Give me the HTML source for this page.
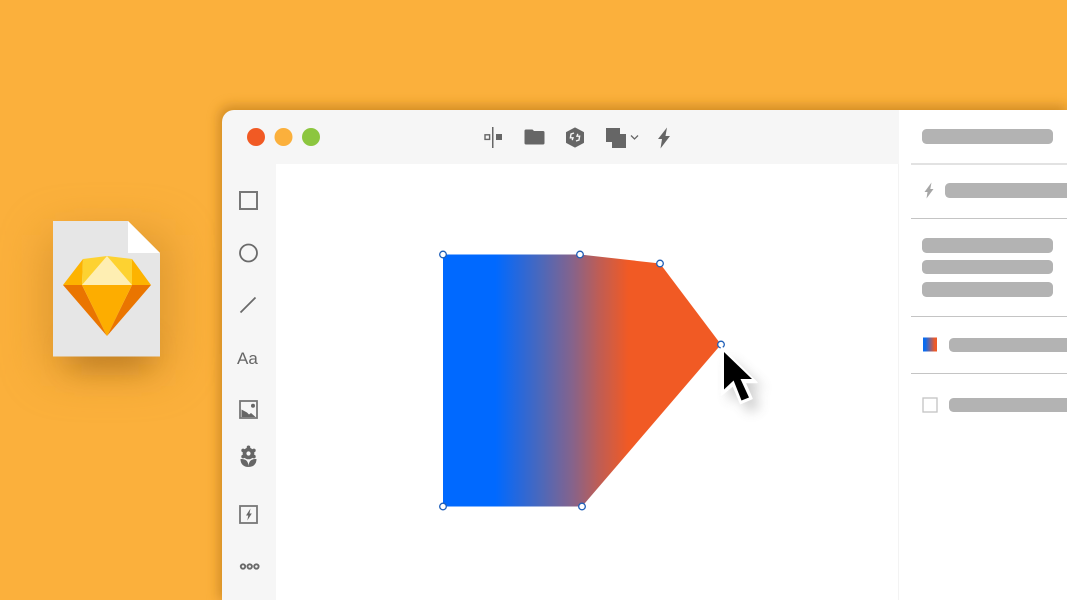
<!DOCTYPE html>
<html>
<head>
<meta charset="utf-8">
<style>
html,body{margin:0;padding:0;width:1067px;height:600px;overflow:hidden;background:#fbb03c}
svg{position:absolute;left:0;top:0;display:block}
</style>
</head>
<body>
<svg width="1067" height="600" viewBox="0 0 1067 600" xmlns="http://www.w3.org/2000/svg">
<defs>
<linearGradient id="g" gradientUnits="userSpaceOnUse" x1="443" y1="0" x2="720" y2="0">
<stop offset="0.19" stop-color="#0069ff"/>
<stop offset="0.35" stop-color="#4a68bc"/>
<stop offset="0.47" stop-color="#87638a"/>
<stop offset="0.56" stop-color="#bd5d56"/>
<stop offset="0.67" stop-color="#f15a24"/>
</linearGradient>
<linearGradient id="sw" x1="0" x2="1" y1="0" y2="0">
<stop offset="0.15" stop-color="#0a6cf0"/>
<stop offset="0.85" stop-color="#ee5a28"/>
</linearGradient>
<filter id="s1" filterUnits="userSpaceOnUse" x="150" y="50" width="950" height="600"><feGaussianBlur stdDeviation="6"/></filter>
<filter id="s2" filterUnits="userSpaceOnUse" x="-60" y="150" width="340" height="340"><feGaussianBlur stdDeviation="14"/></filter>
<filter id="s2b" filterUnits="userSpaceOnUse" x="-60" y="150" width="340" height="340"><feGaussianBlur stdDeviation="24"/></filter>
<filter id="s3" filterUnits="userSpaceOnUse" x="690" y="330" width="110" height="110"><feGaussianBlur stdDeviation="6"/></filter>
<clipPath id="win"><path d="M222 600V122a12 12 0 0 1 12-12H1067V600Z"/></clipPath>
</defs>

<rect width="1067" height="600" fill="#fbb03c"/>

<!-- window shadow -->
<path d="M219 600V118a12 12 0 0 1 12-12H1067V600Z" fill="#b87618" opacity=".65" filter="url(#s1)"/>

<!-- window -->
<g clip-path="url(#win)">
<rect x="222" y="110" width="845" height="490" fill="#f6f6f6"/>
<rect x="276" y="164" width="623" height="436" fill="#fff"/>
<rect x="899" y="110" width="168" height="490" fill="#fff"/>
<rect x="898" y="164" width="1" height="436" fill="#f3f3f3"/>
</g>

<!-- traffic lights -->
<circle cx="256" cy="137" r="9" fill="#f15a24"/>
<circle cx="283.500" cy="137" r="9" fill="#fbb03c"/>
<circle cx="311" cy="137" r="9" fill="#8cc63f"/>

<!-- toolbar icons -->
<g fill="#666">
<rect x="492" y="127" width="1.500" height="21"/>
<rect x="485" y="134.800" width="4.600" height="4.600" fill="none" stroke="#666" stroke-width="1.400"/>
<rect x="496" y="134" width="6" height="6"/>
<path d="M524.500 131a1.500 1.500 0 0 1 1.500-1.500h6.500l1.500 1.500h9a1.500 1.500 0 0 1 1.500 1.500V143a1.500 1.500 0 0 1-1.500 1.500H526a1.500 1.500 0 0 1-1.500-1.500Z"/>
<path d="M575 128l8.500 4.500v10L575 147l-8.500-4.500v-10Z" stroke="#666" stroke-width="1" stroke-linejoin="round"/>
<path d="M606 128h14v6h6v14h-14v-6h-6Z"/>
<path d="M667 127.500l-9 11.500h4l-1.500 9.500 9.500-12.500h-4.500l1.500-8.500Z"/>
</g>
<path d="M574 133l-3 1-.6 3.800h2.600l-.8 2.400M576 141l3-1 .6-3.800h-2.600l.8-2.400" fill="none" stroke="#f6f6f6" stroke-width="1.400"/>
<path d="M631 135.500l3.500 3.500 3.500-3.500" fill="none" stroke="#666" stroke-width="1.300"/>

<!-- left tools -->
<rect x="240" y="192" width="17" height="17" fill="none" stroke="#777" stroke-width="2"/>
<circle cx="248.500" cy="253" r="8.500" fill="none" stroke="#6a6a6a" stroke-width="1.800"/>
<path d="M240.500 312.500L255.500 297.500" stroke="#6a6a6a" stroke-width="1.800" fill="none"/>
<text x="237" y="364" font-family="Liberation Sans, sans-serif" font-size="17" fill="#666">Aa</text>

<rect x="240" y="401" width="17" height="17" fill="none" stroke="#777" stroke-width="1.800"/>
<path d="M241.500 417V409.500L247 412.500L249 414.500L251 413L255.500 417Z" fill="#666"/>
<circle cx="253" cy="405.700" r="2" fill="#666"/>

<g fill="#666">
<circle cx="248.500" cy="453.500" r="5.800"/>
<circle cx="248.500" cy="447.300" r="1.800"/><circle cx="253.900" cy="450.400" r="1.800"/><circle cx="253.900" cy="456.600" r="1.800"/>
<circle cx="243.100" cy="450.400" r="1.800"/><circle cx="243.100" cy="456.600" r="1.800"/>
<path d="M240.500 459c4 0 8 .8 8 8-5 0-8-3-8-8Z"/>
<path d="M256.500 459c-4 0-8 .8-8 8 5 0 8-3 8-8Z"/>
</g>
<circle cx="248.500" cy="453.500" r="2.100" fill="#f6f6f6"/>

<rect x="240" y="506" width="17" height="17" fill="none" stroke="#777" stroke-width="1.800"/>
<path d="M250.500 508.500l-4.500 7h2.300l-1 5 4.500-7h-2.300l1-5Z" fill="#666"/>

<g fill="none" stroke="#6a6a6a" stroke-width="1.900">
<circle cx="243" cy="566.500" r="2.200"/>
<circle cx="249.700" cy="566.500" r="2.200"/>
<circle cx="256.400" cy="566.500" r="2.200"/>
</g>

<!-- shape -->
<path d="M443 254.500H580L660 263.500L721 344.500L582 506.500H443Z" fill="url(#g)"/>
<g fill="#fff" stroke="#1f5fb8" stroke-width="1.300">
<circle cx="443" cy="254.500" r="3.300"/>
<circle cx="580" cy="254.500" r="3.300"/>
<circle cx="660" cy="263.500" r="3.300"/>
<circle cx="721" cy="344.500" r="3.300"/>
<circle cx="582" cy="506.500" r="3.300"/>
<circle cx="443" cy="506.500" r="3.300"/>
</g>

<!-- cursor -->
<path d="M729 358V402L739 393L748 412L760 407L751 389H764Z" fill="#555" opacity=".3" filter="url(#s3)"/>
<path d="M721.500 347V395L733 385.500L740.500 403.500L752 398.500L745 382.500H757Z" fill="#fff" stroke="#fff" stroke-width="1.500" stroke-linejoin="round"/>
<path d="M724 352V389.500L733.600 380.500L741.500 400.500L749 397.500L740.500 379H752Z" fill="#000"/>

<!-- right panel -->
<g fill="#b3b3b3">
<rect x="922" y="129" width="131" height="15" rx="4.500"/>
<rect x="945" y="183" width="130" height="15" rx="4.500"/>
<rect x="922" y="238" width="131" height="15" rx="4.500"/>
<rect x="922" y="260" width="131" height="14" rx="4.500"/>
<rect x="922" y="282" width="131" height="15" rx="4.500"/>
<rect x="949" y="338" width="130" height="14" rx="4.500"/>
<rect x="949" y="398" width="130" height="14" rx="4.500"/>
</g>
<g fill="#c4c4c4">
<rect x="911" y="163.500" width="156" height="1"/>
<rect x="911" y="218" width="156" height="1"/>
<rect x="911" y="316" width="156" height="1"/>
<rect x="911" y="373" width="156" height="1"/>
</g>
<path d="M931.500 182.500l-7 9.500h3l-1 6.500 7-9.500h-3.200l1.200-6.500Z" fill="#a6a6a6"/>
<rect x="923" y="337.500" width="14" height="14" fill="url(#sw)"/>
<rect x="923" y="398" width="14" height="14" fill="#fff" stroke="#c4c4c4" stroke-width="1.300"/>

<!-- file shadow -->
<rect x="48" y="235" width="120" height="135" fill="#b87a20" opacity=".5" filter="url(#s2b)"/>
<rect x="72" y="342" width="76" height="24" fill="#9a5f14" opacity=".55" filter="url(#s2)"/>

<!-- file -->
<path d="M53 221H128L160 253V356.500H53Z" fill="#e6e6e6"/>
<path d="M128 221L160 253H128Z" fill="#fff"/>

<!-- diamond -->
<path d="M63 285L83 259L82 285Z" fill="#fdb300"/>
<path d="M151 285L132 259L132 285Z" fill="#fdb300"/>
<path d="M83 259L107 256L132 259L132 285L82 285Z" fill="#fdd231"/>
<path d="M82 285L107 256L132 285Z" fill="#feeeb2"/>
<path d="M63 285H82L107 336Z" fill="#ea7500"/>
<path d="M151 285H132L107 336Z" fill="#ea7500"/>
<path d="M82 285H132L107 336Z" fill="#fdad00"/>
</svg>
</body>
</html>
